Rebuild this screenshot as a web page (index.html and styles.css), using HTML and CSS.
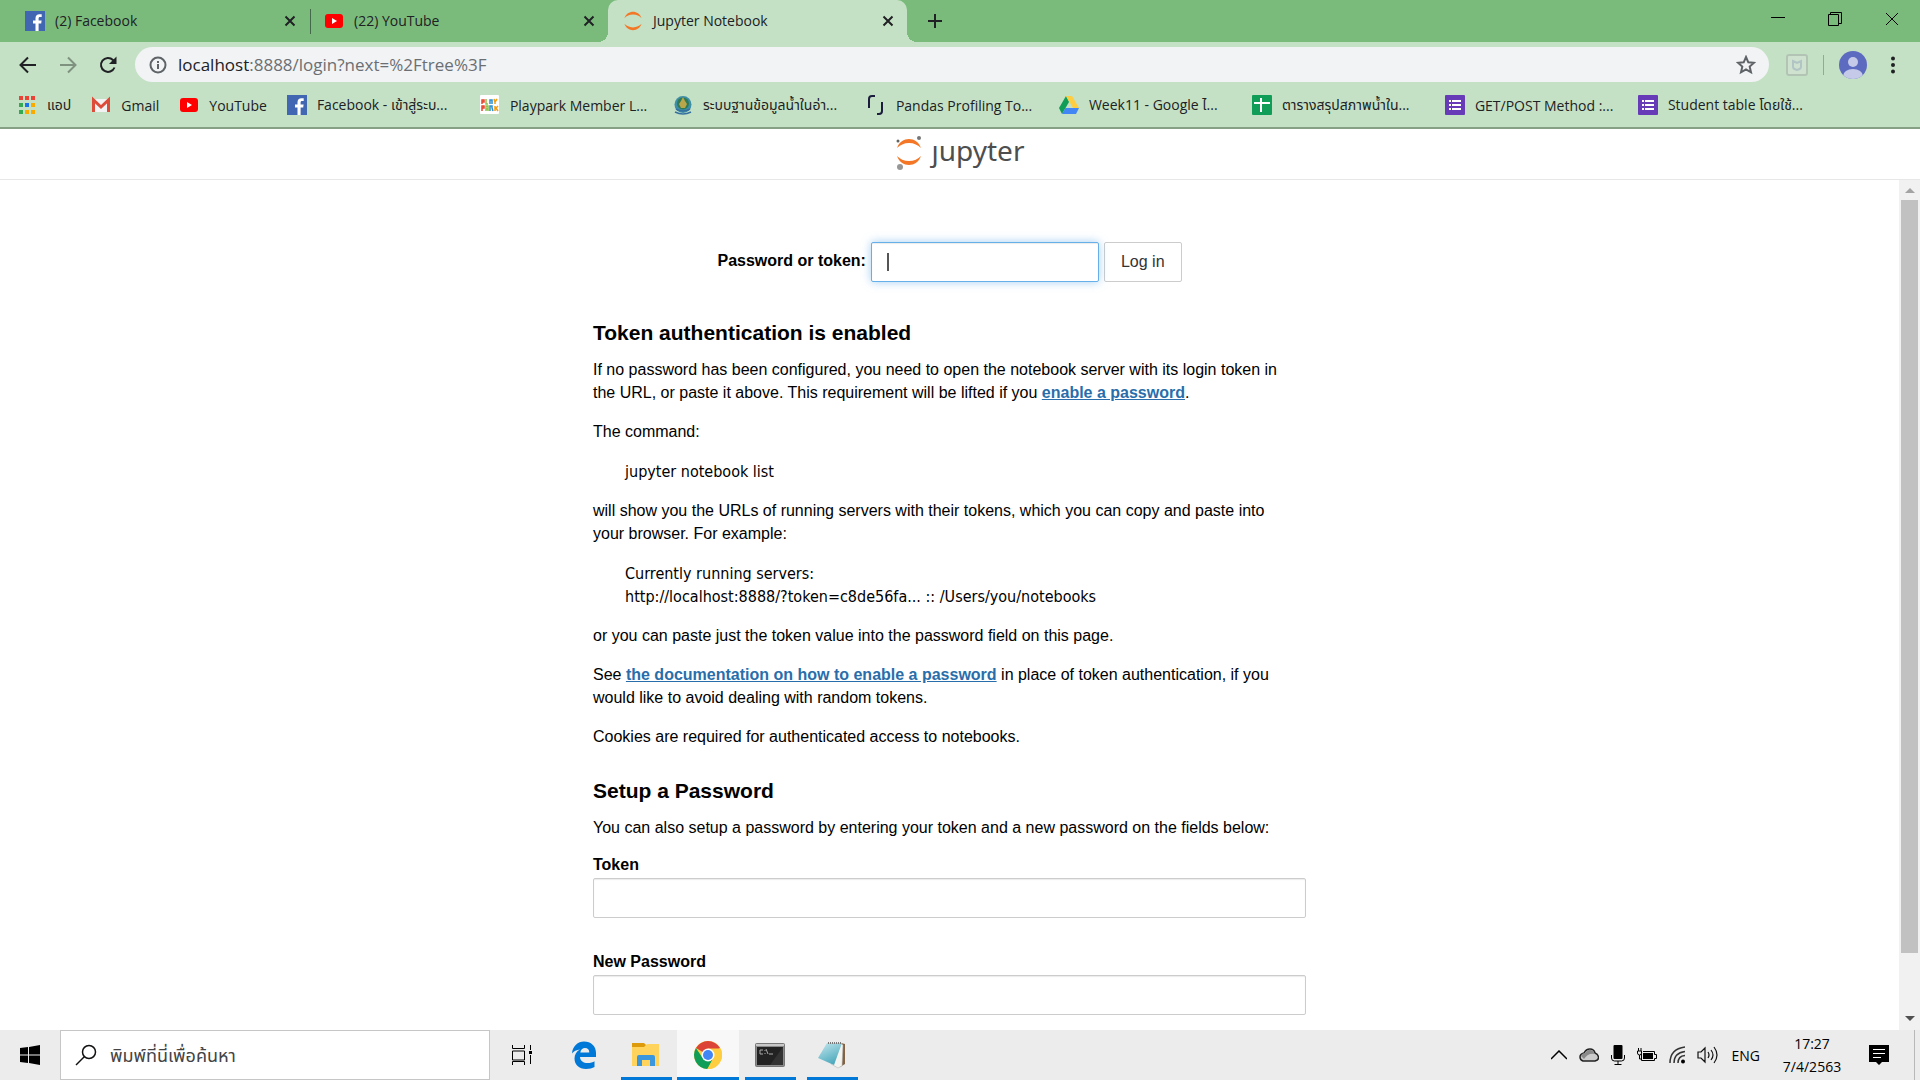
FILE: index.html
```html
<!DOCTYPE html>
<html lang="en">
<head>
    <meta charset="UTF-8">
    <meta name="viewport" content="width=device-width, initial-scale=1.0">
    <title>Jupyter Notebook</title>
    <link rel="stylesheet" href="styles.css">
</head>
<body>
    <!-- Shared icons -->
    <svg class="sprite" width="0" height="0">
        <symbol id="facebook" viewBox="0 0 20 20">
            <rect width="20" height="20" fill="#4267b2"/>
            <path d="M13.600 20v-7.600h2.600l.4-3h-3V7.600c0-.9.3-1.500 1.500-1.500h1.600V3.300c-.3 0-1.200-.1-2.300-.1-2.300 0-3.900 1.400-3.900 4v2.200H8v3h2.500V20z" fill="#fff"/>
        </symbol>
        <symbol id="youtube" viewBox="0 0 20 20">
            <rect x="1" y="3" width="18" height="14" rx="3" fill="#f00"/>
            <path d="M8 7v6l5-3z" fill="#fff"/>
        </symbol>
        <symbol id="close" viewBox="0 0 12 12">
            <path d="M1.500 1.500l9 9M10.500 1.500l-9 9" stroke="#202124" stroke-width="2"/>
        </symbol>
        <symbol id="forms" viewBox="0 0 20 20">
            <rect width="20" height="20" rx="1" fill="#673ab7"/>
            <path d="M4 6h2M4 10h2M4 14h2M7 6h9M7 10h9M7 14h9" stroke="#fff" stroke-width="2"/>
        </symbol>
        <symbol id="planet" viewBox="0 0 26 28">
            <path d="M1 10C3 4 8 1 13 1s10 3 12 9c-3-3-7-5-12-5S4 7 1 10zM1 18c2 6 7 9 12 9s10-3 12-9c-3 3-7 5-12 5s-9-2-12-5z" fill="#f37726"/>
        </symbol>
    </svg>

    <!-- Tabs -->
    <header class="tab-strip">
        <div class="tab">
            <svg class="icon"><use href="#facebook"/></svg>
            <span class="tab-title">(2) Facebook</span>
            <button class="tab-close" aria-label="Close tab"><svg width="12" height="12"><use href="#close"/></svg></button>
        </div>
        <div class="tab">
            <svg class="icon"><use href="#youtube"/></svg>
            <span class="tab-title">(22) YouTube</span>
            <button class="tab-close" aria-label="Close tab"><svg width="12" height="12"><use href="#close"/></svg></button>
        </div>
        <div class="tab active">
            <svg class="icon"><use href="#planet"/></svg>
            <span class="tab-title">Jupyter Notebook</span>
            <button class="tab-close" aria-label="Close tab"><svg width="12" height="12"><use href="#close"/></svg></button>
        </div>
        <button class="new-tab" aria-label="New tab">
            <svg width="16" height="16"><path d="M8 1v14M1 8h14" stroke="#202124" stroke-width="2"/></svg>
        </button>
        <div class="window-buttons">
            <button aria-label="Minimize"><svg width="14" height="14"><path d="M0 5.500h14" stroke="#000"/></svg></button>
            <button aria-label="Restore"><svg width="14" height="14"><path d="M.5 2.500h10v11H.5zM2.500 2.500v-2h11v11h-3" fill="none" stroke="#000"/></svg></button>
            <button aria-label="Close"><svg width="14" height="14"><path d="M1 1l12 12M13 1L1 13" stroke="#000"/></svg></button>
        </div>
    </header>

    <!-- Toolbar -->
    <nav class="toolbar">
        <button class="nav-button" aria-label="Back"><svg width="20" height="20"><path d="M18 10H3M10 2.500L2.500 10l7.500 7.500" fill="none" stroke="#202124" stroke-width="2"/></svg></button>
        <button class="nav-button" aria-label="Forward"><svg width="20" height="20"><path d="M2 10h15M10 2.500l7.500 7.500-7.500 7.500" fill="none" stroke="#7f927f" stroke-width="2"/></svg></button>
        <button class="nav-button" aria-label="Reload"><svg width="20" height="20"><path d="M16.500 12.500A7 7 0 1 1 15 5l1.500 1.500" fill="none" stroke="#202124" stroke-width="2"/><path d="M18.500 1.500v7.500H11z" fill="#202124"/></svg></button>
        <div class="address-bar">
            <svg width="18" height="18"><circle cx="9" cy="9" r="7.500" fill="none" stroke="#5f6368" stroke-width="2"/><path d="M9 8v5M9 5v2" stroke="#5f6368" stroke-width="2"/></svg>
            <a class="url" href="#"><span class="host">localhost</span>:8888/login?next=%2Ftree%3F</a>
            <button aria-label="Bookmark this page"><svg width="20" height="20"><path d="M10 2l2.300 5.300 5.700.5-4.300 3.800 1.300 5.700-5-3-5 3 1.300-5.700L2 7.800l5.700-.5z" fill="none" stroke="#5f6368" stroke-width="2"/></svg></button>
        </div>
        <div class="toolbar-end">
            <button aria-label="Extension"><svg width="22" height="22"><rect x="1" y="1" width="20" height="20" rx="2" fill="#cfe2cf" stroke="#b2c5b5" stroke-width="2"/><path d="M7 7l4 2 4-2v6q0 2-4 3-4-1-4-3z" fill="none" stroke="#b2c5c5" stroke-width="2"/></svg></button>
            <span class="divider"></span>
            <button aria-label="Profile"><svg width="28" height="28"><clipPath id="head"><circle cx="14" cy="14" r="14"/></clipPath><g clip-path="url(#head)"><rect width="28" height="28" fill="#5c6bc0"/><circle cx="14" cy="11" r="5" fill="#c5cae9"/><ellipse cx="14" cy="25" rx="10" ry="7" fill="#c5cae9"/></g></svg></button>
            <button aria-label="Menu"><svg width="6" height="18"><circle cx="3" cy="2.500" r="2" fill="#202124"/><circle cx="3" cy="9" r="2" fill="#202124"/><circle cx="3" cy="15.500" r="2" fill="#202124"/></svg></button>
        </div>
    </nav>

    <!-- Bookmarks -->
    <nav class="bookmarks">
        <a href="#"><svg class="icon" viewBox="0 0 20 20"><path d="M2 1h4v4H2zM8 1h4v4H8zM14 1h4v4h-4z" fill="#ea4335"/><path d="M2 8h4v4H2zM2 15h4v4H2z" fill="#34a853"/><path d="M8 8h4v4H8z" fill="#1a73e8"/><path d="M14 8h4v4h-4zM8 15h4v4H8zM14 15h4v4h-4z" fill="#f9ab00"/></svg><span>แอป</span></a>
        <a href="#"><svg class="icon" viewBox="0 0 20 20"><path d="M1 4h18v13H1z" fill="#f2f2f2"/><path d="M2.500 17V5l7.500 7 7.500-7v12" fill="none" stroke="#dd4b39" stroke-width="3"/></svg><span>Gmail</span></a>
        <a href="#"><svg class="icon"><use href="#youtube"/></svg><span>YouTube</span></a>
        <a class="wide" href="#"><svg class="icon"><use href="#facebook"/></svg><span>Facebook - เข้าสู่ระบ...</span></a>
        <a class="wide" href="#"><svg class="icon" viewBox="0 0 20 20"><rect width="19" height="19" rx="1" fill="#fff"/><g fill="none" stroke-width="1.500"><path d="M2 9V5h2v2H2M2 16v-5h2v2H2" stroke="#e8452c"/><path d="M6 4v5h2M6 16v-5h2v5M6 14h2" stroke="#8bc34a"/><path d="M10 9V5h2v4M10 16v-5h2v2l1 3" stroke="#2a8fd0"/><path d="M14 4l1 3 2-3M15 7v2M15 11v5M18 11l-2 2 2 3" stroke="#f39c12"/></g></svg><span>Playpark Member L...</span></a>
        <a class="wide" href="#"><svg class="icon" viewBox="0 0 20 20"><circle cx="10" cy="9.500" r="8.500" fill="#3d8ea8"/><circle cx="10" cy="8.500" r="6" fill="#2f7a56"/><path d="M10 2l2 4 2 3-2 4h-4L6 9l2-3z" fill="#b9a64a"/><path d="M3 14q7 4 14 0M2 17q8 4 16 0" fill="none" stroke="#356fa0" stroke-width="1.500"/></svg><span>ระบบฐานข้อมูลน้ำในอ่า...</span></a>
        <a class="wide" href="#"><svg class="icon" viewBox="0 0 20 20"><path d="M9 1H6Q3 1 3 4v9M16 7v9q0 3-3 3h-2" fill="none" stroke="#1c1c3c" stroke-width="2"/></svg><span>Pandas Profiling To...</span></a>
        <a class="wide" href="#"><svg class="icon" viewBox="0 0 20 20"><path d="M7 1L0 13l3 6 7-12z" fill="#0f9d58"/><path d="M7 1h6l7 12h-6z" fill="#ffcd40"/><path d="M6.500 13H20l-3 6H3z" fill="#4285f4"/></svg><span>Week11 - Google ไ...</span></a>
        <a class="wide" href="#"><svg class="icon" viewBox="0 0 20 20"><rect width="20" height="20" rx="1" fill="#0f9d58"/><path d="M9 3v14M2 8h16" stroke="#fff" stroke-width="2"/></svg><span>ตารางสรุปสภาพน้ำใน...</span></a>
        <a class="wide" href="#"><svg class="icon"><use href="#forms"/></svg><span>GET/POST Method :...</span></a>
        <a class="wide" href="#"><svg class="icon"><use href="#forms"/></svg><span>Student table โดยใช้...</span></a>
    </nav>

    <!-- Notebook header -->
    <div class="logo-bar">
        <a class="logo" href="#">
            <svg width="26" height="36"><use href="#planet" y="3" width="26" height="28"/><circle cx="23" cy="3" r="2" fill="#767677"/><circle cx="2" cy="6" r="1.500" fill="#616262"/><circle cx="4" cy="32" r="3" fill="#989798"/></svg>
            <span>ȷupyter</span>
        </a>
    </div>

    <!-- Login page -->
    <div class="page">
        <main class="content">
            <form class="login-form">
                <label for="password">Password or token:</label>
                <div class="password-box">
                    <input class="form-control focused" type="password" id="password" name="password">
                    <span class="caret"></span>
                </div>
                <button class="login-button" type="submit">Log in</button>
            </form>

            <h3>Token authentication is enabled</h3>
            <p>If no password has been configured, you need to open the notebook server with its login token in the URL, or paste it above. This requirement will be lifted if you <a href="#">enable a password</a>.</p>
            <p>The command:</p>
            <pre>jupyter notebook list</pre>
            <p>will show you the URLs of running servers with their tokens, which you can copy and paste into your browser. For example:</p>
            <pre>Currently running servers:
http://localhost:8888/?token=c8de56fa... :: /Users/you/notebooks</pre>
            <p>or you can paste just the token value into the password field on this page.</p>
            <p>See <a href="#">the documentation on how to enable a password</a> in place of token authentication, if you would like to avoid dealing with random tokens.</p>
            <p>Cookies are required for authenticated access to notebooks.</p>

            <h3>Setup a Password</h3>
            <p>You can also setup a password by entering your token and a new password on the fields below:</p>
            <form class="setup-form">
                <div class="form-group">
                    <label for="token">Token</label>
                    <input class="form-control" type="password" id="token" name="token">
                </div>
                <div class="form-group">
                    <label for="newPassword">New Password</label>
                    <input class="form-control" type="password" id="newPassword" name="new_password">
                </div>
            </form>
        </main>
        <div class="scrollbar">
            <svg width="10" height="20"><path d="M0 13l5-5 5 5z" fill="#a3a3a3"/></svg>
            <div class="track"><div class="thumb"></div></div>
            <svg width="10" height="20"><path d="M0 6l5 5 5-5z" fill="#505050"/></svg>
        </div>
    </div>

    <!-- Taskbar -->
    <footer class="taskbar">
        <button class="start" aria-label="Start"><svg width="20" height="20"><path d="M0 3l8-1v7.500H0zM9 2l11-2v9.500H9zM0 10.500h8V18l-8-1zM9 10.500h11V20L9 18z" fill="#000"/></svg></button>
        <div class="search">
            <svg width="22" height="22"><circle cx="14" cy="8" r="6.500" fill="none" stroke="#111" stroke-width="1.500"/><path d="M9.500 12.500L1 21" stroke="#111" stroke-width="1.500"/></svg>
            <input type="text" aria-label="Search" placeholder="พิมพ์ที่นี่เพื่อค้นหา">
        </div>
        <button class="app" aria-label="Task view"><svg width="22" height="20"><path d="M1.500 0v3.500h12V0M1.500 6h12v9h-12zM1.500 20v-3.500h12V20M19.500 0v5M19.500 10v9" fill="none" stroke="#000"/><path d="M18 6h3v3h-3z"/></svg></button>
        <button class="app" aria-label="Edge"><svg width="26" height="28" viewBox="0 0 26 28"><path d="M1 12.500C1.500 5 7 .5 13 .5c7 0 12 4.500 12 11.500v4H9c.3 4 3.500 6 7.500 6 3 0 5.500-.8 7-1.800V26c-2 1.200-5 2-8.500 2C8 28 3.500 23.500 3.500 17.500c0-4 2-7.300 5.500-9-3.500.3-6.300 2-8 4zM9.300 11.500h9c0-3-1.500-4.500-4.300-4.500-2.500 0-4.300 1.700-4.700 4.500z" fill="#0078d7"/></svg></button>
        <button class="app open" aria-label="File Explorer"><svg width="28" height="24"><path d="M0 0h12l2 2-1 3H0z" fill="#dd9a0a"/><path d="M0 4h12l3-3h12v22H0z" fill="#ffd35c"/><path d="M5 23V14q0-2 2-2h14q2 0 2 2v9h-5v-6h-8v6z" fill="#3a96dd"/></svg></button>
        <button class="app open current" aria-label="Chrome"><svg width="28" height="28" viewBox="0 0 28 28"><circle cx="14" cy="14" r="14" fill="#ffcd40"/><path d="M14 14L1.900 7a14 14 0 0 1 24.200 0z" fill="#db4437"/><path d="M1.900 7a14 14 0 0 0 11.500 21L19.500 17 14 14 8 16z" fill="#0f9d58"/><path d="M14 7.500h12.400A14 14 0 0 1 13.400 28l6.100-11z" fill="#ffcd40"/><circle cx="14" cy="14" r="6.500" fill="#fff"/><circle cx="14" cy="14" r="5" fill="#4285f4"/></svg></button>
        <button class="app open" aria-label="Command Prompt"><svg width="30" height="24"><rect x=".5" y=".5" width="29" height="23" rx="1" fill="#8b8b8b" stroke="#777"/><rect x="1" y="1" width="28" height="2" fill="#c8c8c8"/><rect x="2" y="4" width="26" height="18" fill="#222"/><path d="M15 22L28 4v18z" fill="#333"/><path d="M8 7H5v4h3M10 7v1M10 10v1M11 6l2 5M14 11h4" fill="none" stroke="#aaa"/></svg></button>
        <button class="app open" aria-label="Notepad"><svg width="28" height="28"><defs><linearGradient id="paper" x1="0" y1="0" x2="0.500" y2="1"><stop offset="0" stop-color="#c5e8ef"/><stop offset="1" stop-color="#4da9bc"/></linearGradient></defs><path d="M23 2l4 1v20l-5 3z" fill="#806244"/><path d="M22 2l3 2-1 21-4 2-7-4z" fill="#f3f4f0" stroke="#aaa" stroke-width=".5"/><path d="M9 2h15L16 24 0 17z" fill="url(#paper)"/><path d="M10 2h14" stroke="#777" stroke-width="2" stroke-dasharray="1 1"/></svg></button>

        <div class="tray">
            <svg width="16" height="10"><path d="M0 9l8-8 8 8" fill="none" stroke="#000" stroke-width="1.500"/></svg>
            <svg width="20" height="14"><path d="M4 13q-3-1-3-4t4-4q2-4 6-4t5 4q3 1 3.500 4t-3.500 4z" fill="#ccc" stroke="#222" stroke-width="1.500"/><path d="M2 8q1-3 4-3 3-4 6-3 3 1 3.500 4Q9 5 5 11z" fill="#8a8a8a"/></svg>
            <svg width="14" height="20"><rect x="2.500" y="0" width="9" height="14" rx="1"/><path d="M.5 10v3q0 3 3 3h7q3 0 3-3v-3M7 16v3M3.500 19.500h7" fill="none" stroke="#000"/></svg>
            <svg width="20" height="14"><path d="M4.500 5.500v7h13v-2h2v-4h-2v-3H6" fill="none" stroke="#000"/><path d="M6 5h10v6H6z"/><path d="M.5 3h4v2q0 2-2 2t-2-2zM1.500 0v3M4 0v3M2.500 7v4h2" fill="none" stroke="#000"/></svg>
            <svg width="16" height="18"><path d="M1 17Q1 3 16 1M5 17Q5 7 16 5.500M9 17q0-7 7-7.500" fill="none" stroke="#333" stroke-width="1.500"/><circle cx="14" cy="15.500" r="2"/></svg>
            <svg width="21" height="18"><path d="M1 6h3l4-4v14l-4-4H1zM11 6q2 3 0 6M14 4q4 5 0 10M17 1q6 8 0 16" fill="none" stroke="#111" stroke-width="1.200"/></svg>
            <span class="language">ENG</span>
            <div class="clock"><span>17:27</span><span>7/4/2563</span></div>
            <button aria-label="Notifications"><svg width="20" height="20"><path d="M0 0h20v17h-7l-3 3-3-3H0z"/><path d="M4 4.500h12M4 8.500h12M4 12.500h8" stroke="#fff"/></svg></button>
            <span class="show-desktop"></span>
        </div>
    </footer>
</body>
</html>
```

FILE: styles.css
```css
* {
    box-sizing: border-box;
}

body {
    margin: 0;
    height: 100vh;
    display: flex;
    flex-direction: column;
    overflow: hidden;
    font-family: "Open Sans", "Noto Sans", "Noto Sans Thai", sans-serif;
    font-size: 14px;
    color: #202124;
    background-color: #fff;
}

button {
    border: none;
    background: none;
    padding: 0;
    display: flex;
    align-items: center;
    justify-content: center;
    font-family: inherit;
}

svg {
    display: block;
    flex: none;
}

.sprite {
    position: absolute;
}

.icon {
    width: 20px;
    height: 20px;
}

/* Tabs */
.tab-strip {
    display: flex;
    align-items: stretch;
    height: 42px;
    flex: none;
    padding-left: 10px;
    background-color: #7abb7c;
}

.tab {
    width: 299px;
    display: flex;
    align-items: center;
    gap: 10px;
    padding: 0 13px 0 15px;
    position: relative;
}

.tab:first-child::after {
    content: "";
    position: absolute;
    right: -2px;
    top: 9px;
    width: 1px;
    height: 25px;
    background-color: #44694a;
}

.tab.active {
    background-color: #c5e1c5;
    border-radius: 10px 10px 0 0;
}

/* curved feet of the active tab */
.tab.active::before,
.tab.active::after {
    content: "";
    position: absolute;
    bottom: 0;
    width: 10px;
    height: 10px;
}

.tab.active::before {
    left: -10px;
    background: radial-gradient(circle at 0 0, transparent 10px, #c5e1c5 10px);
}

.tab.active::after {
    right: -10px;
    background: radial-gradient(circle at 100% 0, transparent 10px, #c5e1c5 10px);
}

.tab-title {
    flex: 1;
    padding-bottom: 2px;
}

.new-tab {
    width: 56px;
}

.window-buttons {
    display: flex;
    margin-left: auto;
}

.window-buttons button {
    width: 57px;
    height: 37px;
}

/* Toolbar */
.toolbar {
    display: flex;
    align-items: center;
    height: 45px;
    flex: none;
    padding-left: 8px;
    background-color: #c5e1c5;
}

.nav-button {
    width: 40px;
    height: 36px;
}

.address-bar {
    flex: 1;
    display: flex;
    align-items: center;
    gap: 11px;
    height: 35px;
    margin-left: 7px;
    padding: 0 13px 0 14px;
    border-radius: 18px;
    background-color: #f1f3f5;
}

.url {
    flex: 1;
    font-size: 17px;
    color: #6b6f73;
    text-decoration: none;
}

.host {
    color: #202124;
}

.toolbar-end {
    display: flex;
    align-items: center;
    gap: 15px;
    padding: 0 24px 0 17px;
}

.toolbar-end button:last-child {
    margin-left: 8px;
}

.divider {
    width: 1px;
    height: 20px;
    background-color: #8fac8f;
}

/* Bookmarks */
.bookmarks {
    display: flex;
    align-items: center;
    gap: 20px;
    height: 42px;
    flex: none;
    padding: 0 0 4px 17px;
    background-color: #c5e1c5;
    border-bottom: 2px solid #86a086;
}

.bookmarks a {
    display: flex;
    align-items: center;
    gap: 10px;
    color: #202124;
    text-decoration: none;
    white-space: nowrap;
}

.bookmarks .wide {
    width: 173px;
}

/* Notebook header */
.logo-bar {
    display: flex;
    justify-content: center;
    height: 51px;
    flex: none;
    border-bottom: 1px solid #e7e7e7;
}

.logo {
    display: flex;
    align-items: center;
    gap: 10px;
    padding-bottom: 2px;
    font-family: "Noto Sans", sans-serif;
    font-size: 28px;
    line-height: 36px;
    color: #4e4e4e;
    text-decoration: none;
}

.logo span {
    padding-bottom: 6px;
}

/* Login page */
.page {
    flex: 1;
    min-height: 0;
    display: flex;
    overflow: hidden;
    font-family: "Liberation Sans", Arial, sans-serif;
    font-size: 16px;
    line-height: 23px;
    color: #000;
}

.content {
    width: 713px;
    margin: 0 auto;
    padding-top: 62px;
}

.login-form {
    display: flex;
    justify-content: center;
    align-items: center;
    gap: 5px;
    margin-bottom: 39px;
}

.login-form label {
    padding-bottom: 4px;
}

label {
    font-weight: bold;
}

.password-box {
    position: relative;
    width: 228px;
}

.form-control {
    display: block;
    width: 100%;
    height: 40px;
    padding: 8px 15px;
    border: 1px solid #ccc;
    border-radius: 2px;
    box-shadow: inset 0 1px 1px rgba(0, 0, 0, 0.08);
    font-size: 16px;
}

.form-control.focused {
    border-color: #66afe9;
    box-shadow: inset 0 1px 1px rgba(0, 0, 0, 0.08), 0 0 10px rgba(102, 175, 233, 0.6);
}

.caret {
    position: absolute;
    left: 16px;
    top: 11px;
    width: 2px;
    height: 18px;
    background-color: #555;
}

.login-button {
    height: 40px;
    padding: 0 16px;
    border: 1px solid #ccc;
    border-radius: 2px;
    font-size: 16px;
    color: #333;
}

.content h3 {
    margin: 31px 0 14px;
    font-size: 21px;
    line-height: 23px;
}

.content p {
    margin: 0 0 16px;
    padding-right: 16px;
}

.content p a {
    color: #296eaa;
    font-weight: bold;
}

.content pre {
    margin: 17px 0 16px;
    padding-left: 32px;
    font-family: "DejaVu Sans Condensed", "DejaVu Sans", sans-serif;
    font-size: 16px;
}

.setup-form {
    display: flex;
    flex-direction: column;
    gap: 32px;
    margin-top: -2px;
}

.form-group {
    display: flex;
    flex-direction: column;
    gap: 2px;
}

.scrollbar {
    width: 21px;
    display: flex;
    flex-direction: column;
    align-items: center;
    background-color: #f1f1f1;
}

.track {
    flex: 1;
    width: 17px;
}

.thumb {
    height: 93%;
    background-color: #c1c1c1;
}

/* Taskbar */
.taskbar {
    display: flex;
    align-items: stretch;
    height: 50px;
    flex: none;
    background-color: #ececec;
}

.start {
    width: 60px;
}

.search {
    width: 430px;
    display: flex;
    align-items: center;
    gap: 11px;
    margin-right: 1px;
    padding: 0 14px;
    background-color: #fff;
    border: 1px solid #c6c6c6;
}

.search input {
    flex: 1;
    border: none;
    font-family: inherit;
    font-size: 18px;
}

.search input::placeholder {
    color: #444;
}

.app {
    width: 62px;
}

.app.open {
    background: linear-gradient(#0078d7, #0078d7) center bottom / 51px 3px no-repeat;
}

.app.open.current {
    background-color: #f8f8f8;
    background-size: 100% 3px;
}

.tray {
    display: flex;
    align-items: center;
    gap: 12px;
    margin-left: auto;
    color: #000;
}

.language {
    padding-left: 2px;
}

.clock {
    width: 74px;
    margin: 0 8px 0 3px;
    display: flex;
    flex-direction: column;
    align-items: center;
    line-height: 23px;
}

.show-desktop {
    align-self: stretch;
    width: 6px;
    margin-left: 13px;
    border-left: 1px solid #b8b8b8;
}
```
